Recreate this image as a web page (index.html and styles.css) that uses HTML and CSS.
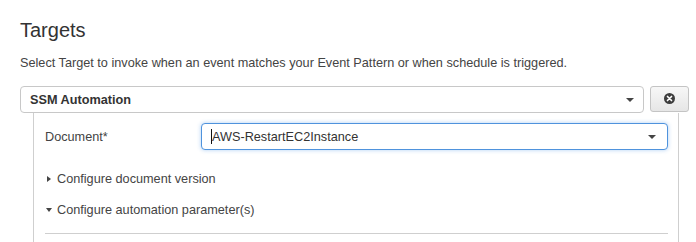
FILE: index.html
```html
<!DOCTYPE html>
<html>
<head>
    <title>Targets</title>
    <link rel="stylesheet" href="styles.css">
</head>
<body>
    <h2 class="title">Targets</h2>
    <p class="hint">Select Target to invoke when an event matches your Event Pattern or when schedule is triggered.</p>

    <div class="target-row">
        <div class="select target-type">
            <span>SSM Automation</span>
            <span class="caret"></span>
        </div>
        <button class="remove-btn" title="Remove target">
            <svg width="11" height="11" viewBox="0 0 12 12">
                <circle cx="6" cy="6" r="6" fill="#3d3d3d"/>
                <path d="M3.8 3.8 L8.2 8.2 M8.2 3.8 L3.8 8.2" stroke="#fff" stroke-width="1.8" stroke-linecap="round"/>
            </svg>
        </button>
    </div>

    <div class="target-panel">
        <div class="field-row">
            <label class="field-label">Document*</label>
            <div class="select doc-select">
                <span><span class="cursor"></span>AWS-RestartEC2Instance</span>
                <span class="caret"></span>
            </div>
        </div>
        <div class="toggle first"><span class="tri-right"></span>Configure document version</div>
        <div class="toggle"><span class="tri-down"></span>Configure automation parameter(s)</div>
        <div class="divider"></div>
    </div>
</body>
</html>
```

FILE: styles.css
```css
body {
    font-family: "Liberation Sans", Arial, sans-serif;
    margin: 0;
    padding: 0 7px 0 20px;
    color: #444;
    background: #fff;
}
.title {
    font-size: 20px;
    font-weight: normal;
    color: #333;
    margin: 0;
    padding-top: 18px;
    line-height: 24px;
}
.hint {
    font-size: 12.7px;
    margin: 13px 0 0 0;
    line-height: 16px;
}
.target-row {
    display: flex;
    align-items: flex-start;
    gap: 6px;
    margin-top: 15px;
}
.select {
    display: flex;
    align-items: center;
    justify-content: space-between;
    box-sizing: border-box;
    background: #fff;
    border: 1px solid #c8c8c8;
    border-radius: 4px;
    font-size: 12.7px;
    color: #333;
}
.target-type {
    flex: 1;
    height: 27px;
    padding: 0 9px 0 9px;
    font-weight: bold;
}
.caret {
    width: 0;
    height: 0;
    border-left: 4px solid transparent;
    border-right: 4px solid transparent;
    border-top: 4px solid #444;
    margin-top: 1px;
}
.remove-btn {
    width: 39px;
    height: 26px;
    box-sizing: border-box;
    border: 1px solid #c4c4c4;
    border-radius: 3px;
    background: linear-gradient(to bottom, #f7f7f7, #e6e6e6);
    display: flex;
    align-items: center;
    justify-content: center;
    padding: 0 0 2px 0;
    cursor: pointer;
}
.target-panel {
    margin-left: 13px;
    margin-right: 10px;
    border-left: 1px solid #cfcfcf;
    border-right: 1px solid #cfcfcf;
    padding: 10px 10px 0 11px;
    height: 140px;
    box-sizing: border-box;
}
.field-row {
    display: flex;
    align-items: center;
}
.field-label {
    width: 156px;
    font-size: 12.7px;
    color: #444;
}
.doc-select {
    flex: 1;
    height: 27px;
    padding: 0 11px 0 9px;
    border-color: #4f93dd;
    box-shadow: 0 0 4px rgba(80, 150, 230, 0.45);
}
.cursor {
    display: inline-block;
    width: 1px;
    height: 15px;
    background: #111;
    vertical-align: -3px;
}
.toggle {
    font-size: 12.7px;
    color: #444;
    display: flex;
    align-items: center;
    gap: 4px;
    margin-top: 15px;
    height: 16px;
}
.toggle.first {
    margin-top: 21px;
}
.tri-right {
    width: 0;
    height: 0;
    border-top: 3.5px solid transparent;
    border-bottom: 3.5px solid transparent;
    border-left: 4px solid #444;
    margin: 0 2px 0 2px;
}
.tri-down {
    width: 0;
    height: 0;
    border-left: 3.5px solid transparent;
    border-right: 3.5px solid transparent;
    border-top: 4px solid #444;
    margin: 0 1px 0 1px;
}
.divider {
    border-top: 1px solid #cfcfcf;
    margin-top: 15px;
}
```
